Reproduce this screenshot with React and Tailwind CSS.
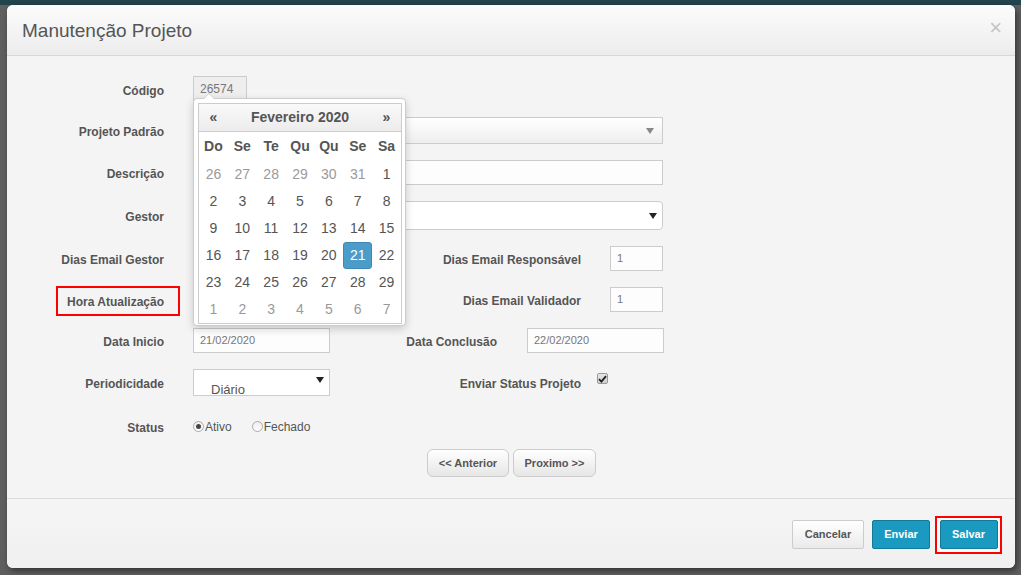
import React from "react";

const font = { fontFamily: '"Liberation Sans", Arial, sans-serif' };

const weeks = [
  [[26, 1], [27, 1], [28, 1], [29, 1], [30, 1], [31, 1], [1, 0]],
  [[2, 0], [3, 0], [4, 0], [5, 0], [6, 0], [7, 0], [8, 0]],
  [[9, 0], [10, 0], [11, 0], [12, 0], [13, 0], [14, 0], [15, 0]],
  [[16, 0], [17, 0], [18, 0], [19, 0], [20, 0], [21, 2], [22, 0]],
  [[23, 0], [24, 0], [25, 0], [26, 0], [27, 0], [28, 0], [29, 0]],
  [[1, 1], [2, 1], [3, 1], [4, 1], [5, 1], [6, 1], [7, 1]],
];

const Label = ({ children, className = "w-[157px]" }) => (
  <div className={`${className} shrink-0 pt-[3px] text-right text-[12px] font-bold text-[#555]`}>{children}</div>
);

const Input = ({ value = "", className = "" }) => (
  <div className={`h-full border border-[#ccc] bg-[#fdfdfd] flex items-center px-[6px] text-[11px] text-[#777] ${className}`}>
    {value}
  </div>
);

const Arrow = ({ className = "" }) => (
  <svg width="8" height="6" viewBox="0 0 8 6" className={className}>
    <path d="M0 0 L8 0 L4 6 Z" fill="currentColor" />
  </svg>
);

// datepicker dropdown
const Calendar = () => (
  <div className="absolute left-[186px] top-[42px] w-[213px] h-[228px] bg-white border border-[#ccc] rounded-[4px] shadow-[0_3px_8px_rgba(0,0,0,0.18)]">
    <div className="absolute -top-[6px] left-[9px] w-0 h-0 border-l-[6px] border-r-[6px] border-b-[6px] border-l-transparent border-r-transparent border-b-[#ccc]" />
    <div className="absolute -top-[5px] left-[10px] w-0 h-0 border-l-[5px] border-r-[5px] border-b-[5px] border-l-transparent border-r-transparent border-b-white" />
    <div className="mx-[4px] mt-[4px] w-[204px] border border-[#ccc] text-[14px] text-[#555]">
      <div className="h-[28px] flex items-center border-b border-[#ccc] bg-gradient-to-b from-[#f9f9f9] to-[#ececec] font-bold">
        <div className="w-[29px] text-center">«</div>
        <div className="flex-1 text-center">Fevereiro 2020</div>
        <div className="w-[29px] text-center">»</div>
      </div>
      <div className="grid grid-cols-7 h-[29px] items-center font-bold text-center">
        {["Do", "Se", "Te", "Qu", "Qu", "Se", "Sa"].map((d, i) => (
          <div key={i}>{d}</div>
        ))}
      </div>
      {weeks.map((w, i) => (
        <div key={i} className="grid grid-cols-7 h-[27px] text-center">
          {w.map(([n, t], j) => (
            <div key={j} className="flex items-center justify-center">
              {t === 2 ? (
                <span className="w-[29px] h-[27px] flex items-center justify-center rounded-[3px] bg-[#4b9cc8] border border-[#3f8ab5] text-white">
                  {n}
                </span>
              ) : (
                <span className={t === 1 ? "text-[#9a9a9a]" : ""}>{n}</span>
              )}
            </div>
          ))}
        </div>
      ))}
    </div>
  </div>
);

const Radio = ({ checked, label }) => (
  <div className="flex items-center text-[12px] text-[#555]">
    <span className="w-[11px] h-[11px] rounded-full border border-[#aaa] bg-gradient-to-b from-[#eee] to-[#fff] flex items-center justify-center">
      {checked && <span className="w-[5px] h-[5px] rounded-full bg-[#444]" />}
    </span>
    <span className="ml-[1px] pt-[2px]">{label}</span>
  </div>
);

const Btn = ({ children, className = "" }) => (
  <div className={`h-[29px] flex items-center justify-center text-[11px] font-bold rounded-[2px] ${className}`}>{children}</div>
);

export default function App() {
  return (
    <div className="w-[1021px] h-[575px] bg-[#5f5f5f] flex flex-col overflow-hidden" style={font}>
      <div className="h-[5px] bg-[#22444c]" />
      <div className="pl-[7px]">
        <div className="w-[1008px] h-[563px] bg-[#f4f4f4] rounded-[6px] flex flex-col shadow-[2px_3px_6px_rgba(0,0,0,0.45)] overflow-hidden">
          {/* header */}
          <div className="h-[51px] shrink-0 flex items-center justify-between pl-[15px] pr-[13px] border-b border-[#d8d8d8] bg-gradient-to-b from-[#fcfcfc] to-[#ececec]">
            <div className="text-[19px] text-[#555] pt-[3px]">Manutenção Projeto</div>
            <div className="text-[22px] leading-none text-[#c4c4c4] -mt-[4px]">×</div>
          </div>

          {/* body */}
          <div className="relative h-[442px] shrink-0 flex flex-col pt-[20px]">
            <div className="flex items-center h-[26px]">
              <Label>Código</Label>
              <div className="ml-[29px] w-[54px] h-full border border-[#ccc] bg-[#eee] flex items-center px-[6px] text-[12px] text-[#777]">
                26574
              </div>
            </div>

            <div className="flex items-center h-[27px] mt-[15px]">
              <Label>Projeto Padrão</Label>
              <div className="ml-[29px] w-[470px] h-full border border-[#ccc] bg-gradient-to-b from-[#fff] to-[#eee] flex items-center justify-end pr-[8px] text-[#888]">
                <Arrow />
              </div>
            </div>

            <div className="flex items-center h-[25px] mt-[16px]">
              <Label>Descrição</Label>
              <Input className="ml-[29px] w-[470px]" />
            </div>

            <div className="flex items-center h-[29px] mt-[16px]">
              <Label>Gestor</Label>
              <div className="ml-[29px] w-[470px] h-full border border-[#ccc] rounded-[4px] bg-white flex items-center justify-end pr-[5px] text-[#222]">
                <Arrow />
              </div>
            </div>

            <div className="flex items-center h-[25px] mt-[16px]">
              <Label>Dias Email Gestor</Label>
              <Input className="ml-[29px] w-[136px]" />
              <Label className="w-[252px]">Dias Email Responsável</Label>
              <Input value="1" className="ml-[29px] w-[53px]" />
            </div>

            <div className="flex items-center h-[25px] mt-[16px]">
              <div className="w-[157px] shrink-0 flex justify-end">
                <div className="w-[124px] h-[30px] -mr-[16px] mt-[3px] border-2 border-[#ff0000] flex items-center justify-end pr-[14px] pt-[2px] text-[12px] font-bold text-[#555]">
                  Hora Atualização
                </div>
              </div>
              <Input className="ml-[29px] w-[136px]" />
              <Label className="w-[252px]">Dias Email Validador</Label>
              <Input value="1" className="ml-[29px] w-[53px]" />
            </div>

            <div className="flex items-center h-[25px] mt-[16px]">
              <Label>Data Inicio</Label>
              <Input value="21/02/2020" className="ml-[29px] w-[137px] border-[#7eaed8]" />
              <Label className="w-[167px]">Data Conclusão</Label>
              <Input value="22/02/2020" className="ml-[30px] w-[137px]" />
            </div>

            <div className="flex items-center h-[27px] mt-[16px]">
              <Label>Periodicidade</Label>
              <div className="ml-[29px] w-[137px] h-full border border-[#ccc] bg-white flex items-end overflow-hidden relative">
                <span className="ml-[17px] -mb-[4px] text-[13px] text-[#555]">Diário</span>
                <Arrow className="ml-auto mr-[5px] mb-[12px] text-[#222]" />
              </div>
              <Label className="w-[251px]">Enviar Status Projeto</Label>
              <div className="ml-[16px] -mt-[8px] w-[11px] h-[11px] border border-[#999] rounded-[2px] bg-gradient-to-b from-[#e6e6e6] to-[#d0d0d0] flex items-center justify-center">
                <svg width="9" height="8" viewBox="0 0 9 8">
                  <path d="M1 4.2 L3.4 6.6 L8 1.2" stroke="#222" strokeWidth="1.8" fill="none" />
                </svg>
              </div>
            </div>

            <div className="flex items-center h-[20px] mt-[20px]">
              <Label>Status</Label>
              <div className="ml-[29px] flex items-center gap-[20px]">
                <Radio checked label="Ativo" />
                <Radio label="Fechado" />
              </div>
            </div>

            <div className="flex items-center h-[28px] mt-[13px] pl-[420px] gap-[4px]">
              <div className="w-[82px] h-full rounded-[6px] border border-[#ccc] bg-gradient-to-b from-[#fff] to-[#e6e6e6] flex items-center justify-center text-[11px] font-bold text-[#555]">
                &lt;&lt; Anterior
              </div>
              <div className="w-[83px] h-full rounded-[6px] border border-[#ccc] bg-gradient-to-b from-[#fff] to-[#e6e6e6] flex items-center justify-center text-[11px] font-bold text-[#555]">
                Proximo &gt;&gt;
              </div>
            </div>

            <Calendar />
          </div>

          {/* footer */}
          <div className="flex-1 border-t border-[#dcdcdc] bg-gradient-to-b from-[#f5f5f5] to-[#f0f0f0] flex items-center justify-end pr-[13px] pt-[2px]">
            <Btn className="w-[72px] border border-[#ccc] bg-gradient-to-b from-[#fff] to-[#eaeaea] text-[#555]">Cancelar</Btn>
            <Btn className="ml-[8px] w-[58px] border border-[#12799a] bg-[#1a9ac1] text-white">Enviar</Btn>
            <div className="ml-[5px] w-[67px] h-[38px] border-2 border-[#ff0000] bg-white flex items-center justify-center">
              <Btn className="w-[58px] border border-[#12799a] bg-[#1a9ac1] text-white">Salvar</Btn>
            </div>
          </div>
        </div>
      </div>
    </div>
  );
}
